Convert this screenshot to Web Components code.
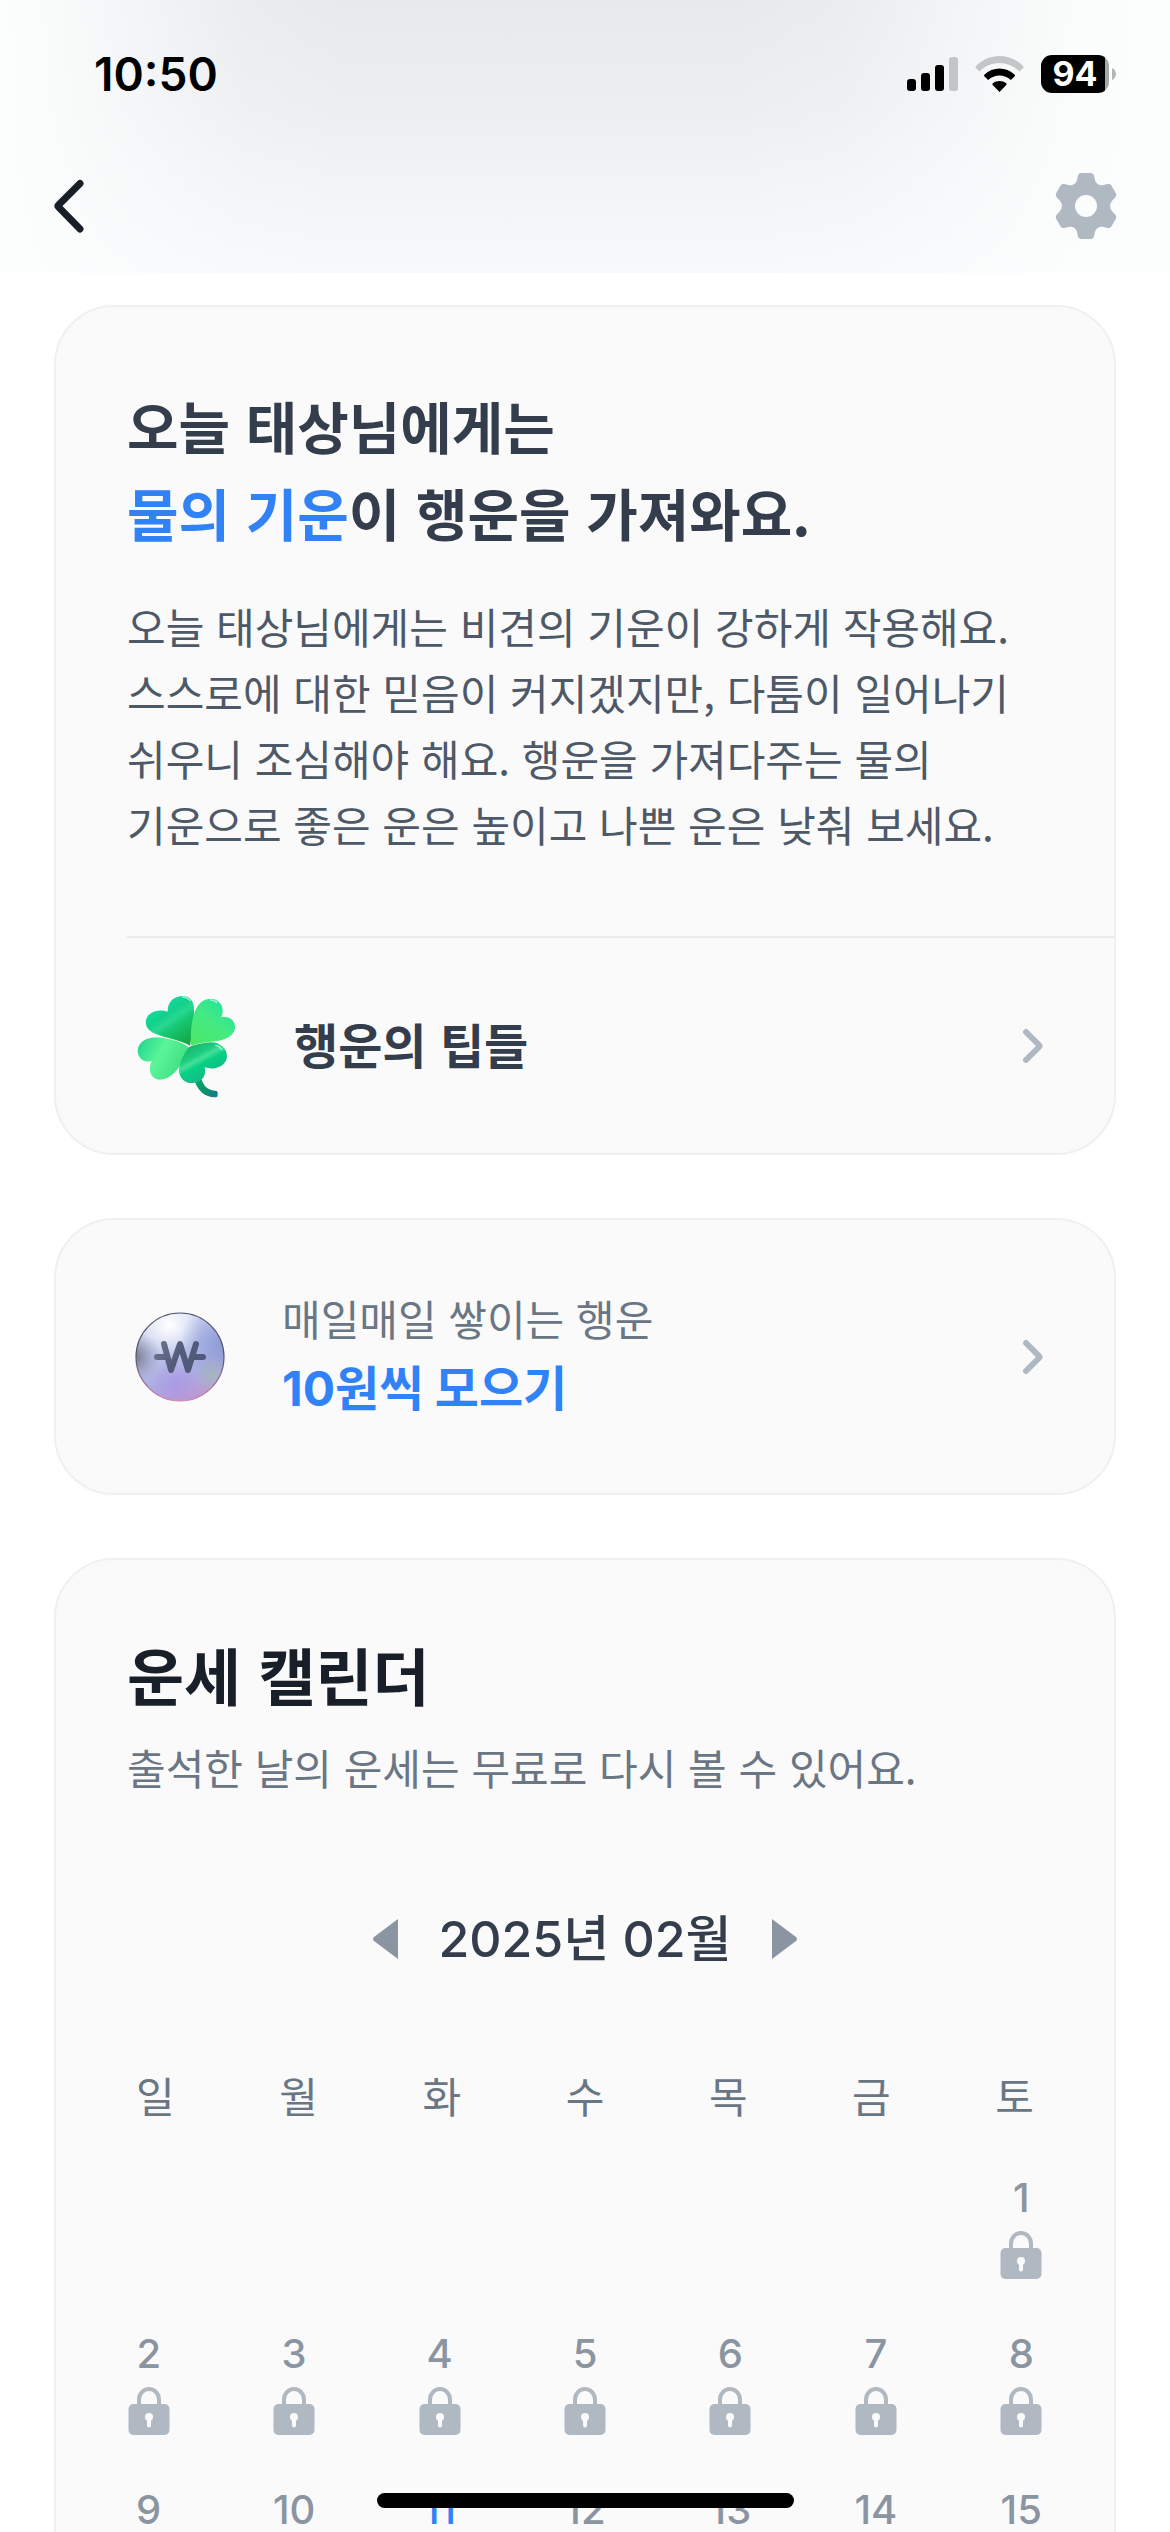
<!DOCTYPE html>
<html lang="ko">
<head>
<meta charset="utf-8">
<meta name="viewport" content="width=device-width, initial-scale=1">
<title>오늘의 운세</title>
<style>
  body {
    margin: 0;
    background: #fff;
    font-family: "Noto Sans CJK KR", "Noto Sans", sans-serif;
    --num: Inter, "Noto Sans CJK KR", sans-serif;
    --ink: #191f28;
    --strong: #333d4b;
    --body: #4e5968;
    --muted: #6b7684;
    --faint: #8b95a1;
    --icon: #b0b8c1;
    --blue: #3182f6;
    --line: #f0f0f0;
  }
</style>
</head>
<body>
<fortune-app></fortune-app>

<template id="t-app">
  <style>
    :host { display: flex; flex-direction: column; height: 100vh; overflow: hidden; }
    header {
      flex: none;
      background:
        linear-gradient(to right, #fcfdfd 0%, #fcfdfde6 4%, #fcfdfd80 13%, #fcfdfd26 21%, #fcfdfd00 30%, #fcfdfd00 62%, #fcfdfd26 72%, #fcfdfd80 81%, #fcfdfde6 91%, #fcfdfd 98%),
        linear-gradient(#e7eaed, #eceef0 40%, #f2f3f5 65%, #f8f9fb);
    }
    main { flex: 1; min-height: 0; overflow: hidden; display: flex; flex-direction: column; gap: 63px; padding: 32px 54px 0; }
    main > * { flex: none; }
    em { font-style: normal; color: var(--blue); }
  </style>
  <header>
    <status-bar></status-bar>
    <nav-bar></nav-bar>
  </header>
  <main>
    <fortune-card>
      <fortune-summary>
        <span slot="title">오늘 태상님에게는<br><em>물의 기운</em>이 행운을 가져와요.</span>
        <span slot="text">오늘 태상님에게는 비견의 기운이 강하게 작용해요.<br>스스로에 대한 믿음이 커지겠지만, 다툼이 일어나기<br>쉬우니 조심해야 해요. 행운을 가져다주는 물의<br>기운으로 좋은 운은 높이고 나쁜 운은 낮춰 보세요.</span>
      </fortune-summary>
      <tips-row>행운의 팁들</tips-row>
    </fortune-card>
    <fortune-card>
      <reward-row><span slot="label">매일매일 쌓이는 행운</span><span slot="value">10원씩 모으기</span></reward-row>
    </fortune-card>
    <fortune-card>
      <fortune-calendar></fortune-calendar>
    </fortune-card>
  </main>
  <home-indicator></home-indicator>
</template>

<template id="t-status">
  <style>
    :host { display: flex; align-items: center; justify-content: space-between; height: 148px; padding: 0 54px 0 94px; font-family: var(--num); color: #000; }
    time { font-size: 46px; font-weight: 600; }
    .right { display: flex; align-items: center; gap: 17px; }
    .battery { display: flex; align-items: center; gap: 3px; }
    .level { display: grid; place-items: center; width: 68px; height: 38px; border-radius: 11px; background: linear-gradient(to right, #000 94%, #a6a7a8 94%); color: #fff; font-size: 34px; font-weight: 700; line-height: 38px; }
    svg { display: block; }
  </style>
  <time>10:50</time>
  <div class="right">
    <svg width="51" height="36" viewBox="0 0 51 36" aria-hidden="true">
      <rect x="0" y="23" width="9" height="12" rx="3"/><rect x="14" y="17" width="9" height="18" rx="3"/>
      <rect x="28" y="9" width="9" height="26" rx="3"/><rect x="42" y="1" width="9" height="34" rx="3" fill="#c4c5c6"/>
    </svg>
    <svg width="49" height="36" viewBox="0 0 49 36" aria-hidden="true">
      <path d="M.8 10.2C14-3.4 35-3.4 48.2 10.2c.5.6.5 1.200 0 1.700l-3.600 3.600C33 4.200 16 4.200 4.400 15.500L.8 11.900c-.5-.5-.5-1.100 0-1.700z" fill="#c4c5c6"/>
      <path d="M9.300 18.700c8.600-8.300 21.800-8.300 30.400 0 .5.500.5 1.100 0 1.600l-3.800 3.800c-6.600-6-16.200-6-22.800 0l-3.800-3.800c-.5-.5-.5-1.100 0-1.600z"/>
      <path d="M17.800 27.300c3.900-3.200 9.500-3.200 13.400 0 .6.500.6 1.100.1 1.600L24.500 36l-6.800-7.100c-.5-.5-.5-1.100.1-1.600z"/>
    </svg>
    <div class="battery">
      <div class="level">94</div>
      <svg width="4" height="12" viewBox="0 0 4 12" aria-hidden="true"><path d="M0 0c5.300 2 5.300 10 0 12z" fill="#b4b5b6"/></svg>
    </div>
  </div>
</template>

<template id="t-nav">
  <style>
    :host { display: flex; align-items: center; justify-content: space-between; height: 115px; padding: 0 52px 10px; }
    button { display: block; border: 0; padding: 0; background: none; }
    svg { display: block; }
  </style>
  <button aria-label="뒤로">
    <svg width="34" height="56" viewBox="0 0 34 56" fill="none" stroke="#191f28" stroke-width="7" stroke-linecap="round" stroke-linejoin="round"><path d="M28 5.500 6.500 27q-1 1 0 2L28 51"/></svg>
  </button>
  <button aria-label="설정">
    <svg width="64" height="66" viewBox="0 0 64 66"><path fill="#b0b8c1" fill-rule="evenodd" d="M27.500 0h9c2 0 3.200 1 3.600 3l1 4.500c1 3.600 5 5.500 8.500 4.600l4-1c1.600-.4 3 .1 3.900 1.600l4.200 7.200c.9 1.500.6 3.200-.6 4.500l-3.200 3.600c-2.400 3-2.400 7 0 10l3.200 3.600c1.200 1.300 1.500 3 .6 4.500l-4.200 7.200c-.9 1.500-2.300 2-3.900 1.600l-4-1c-3.500-.9-7.500 1-8.500 4.600l-1 4.500c-.4 2-1.600 3-3.600 3h-9c-2 0-3.200-1-3.600-3l-1-4.500c-1-3.600-5-5.500-8.500-4.600l-4 1c-1.600.4-3-.1-3.900-1.600l-4.200-7.200c-.9-1.500-.6-3.200.6-4.500L6.100 38c2.400-3 2.400-7 0-10l-3.200-3.600c-1.200-1.300-1.500-3-.6-4.500l4.200-7.200c.9-1.500 2.300-2 3.900-1.600l4 1c3.500.9 7.500-1 8.500-4.600l1-4.500c.4-2 1.600-3 3.600-3zM32 22a11 11 0 1 0 0 22 11 11 0 0 0 0-22z"/></svg>
  </button>
</template>

<template id="t-card">
  <style>
    :host { display: block; box-sizing: border-box; background: #fafafa; border: 2px solid var(--line); border-radius: 60px; overflow: hidden; }
  </style>
  <slot></slot>
</template>

<template id="t-summary">
  <style>
    :host { display: block; padding: 74px 71px 0; }
    h1 { margin: 0; font-size: 56px; line-height: 87px; font-weight: 700; color: var(--strong); white-space: nowrap; }
    p { margin: 38px 0 0; font-size: 42px; line-height: 66px; color: var(--body); white-space: nowrap; }
  </style>
  <h1><slot name="title"></slot></h1>
  <p><slot name="text"></slot></p>
</template>

<template id="t-tips">
  <style>
    :host { display: block; margin-top: 79px; padding-left: 71px; }
    a { display: flex; align-items: center; height: 215px; padding-right: 70px; border-top: 2px solid #ebebeb; text-decoration: none; font-size: 48px; line-height: 72px; font-weight: 700; color: var(--strong); }
    .pic { width: 120px; margin-right: 47px; display: grid; place-items: center; }
    .name { flex: 1; padding-bottom: 6px; }
    svg { display: block; }
  </style>
  <a href="#tips">
    <span class="pic">
      <svg width="120" height="120" viewBox="51 50 360 360" aria-hidden="true">
        <defs>
          <linearGradient id="d1" gradientUnits="userSpaceOnUse" x1="140" y1="100" x2="225" y2="225"><stop offset="0" stop-color="#0fe0a6"/><stop offset=".3" stop-color="#13d08a"/><stop offset=".45" stop-color="#28d892"/><stop offset=".58" stop-color="#16c975"/><stop offset="1" stop-color="#16a846"/></linearGradient>
          <linearGradient id="d2" gradientUnits="userSpaceOnUse" x1="345" y1="100" x2="250" y2="215"><stop offset="0" stop-color="#25e29a"/><stop offset=".45" stop-color="#44ea82"/><stop offset="1" stop-color="#4be76a"/></linearGradient>
          <linearGradient id="d3" gradientUnits="userSpaceOnUse" x1="85" y1="220" x2="215" y2="290"><stop offset="0" stop-color="#22d78f"/><stop offset=".5" stop-color="#5bf598"/><stop offset="1" stop-color="#3fe083"/></linearGradient>
          <linearGradient id="d4" gradientUnits="userSpaceOnUse" x1="240" y1="225" x2="300" y2="335"><stop offset="0" stop-color="#14b766"/><stop offset=".3" stop-color="#1ccc81"/><stop offset=".42" stop-color="#43e09a"/><stop offset=".55" stop-color="#08d083"/><stop offset="1" stop-color="#12b58a"/></linearGradient>
          <linearGradient id="d5" gradientUnits="userSpaceOnUse" x1="262" y1="335" x2="322" y2="376"><stop offset="0" stop-color="#07a46a"/><stop offset=".6" stop-color="#0b8d70"/><stop offset="1" stop-color="#167a8c"/></linearGradient>
        </defs>
        <path d="M254 336C264 365 285 384 314 384Q323 385 323 376V370Q323 363 314 364C294 362 282 352 274 330Z" fill="url(#d5)"/>
        <path d="M240 229C205 210 165 206 140 195 105 182 100 155 116 137 130 123 155 121 173 127 172 100 190 81 216 80 240 80 252 94 252 122 252 160 247 195 240 229Z" fill="url(#d1)"/>
        <path d="M243 229C240 180 247 135 262 112 275 92 290 88 308 89 334 94 345 118 334 144 360 138 377 155 375 177 370 203 345 212 315 216 290 219 265 221 243 229Z" fill="url(#d2)"/>
        <path d="M236 233C200 210 160 203 125 205 97 208 82 228 83 247 86 270 105 281 126 275 112 300 122 330 149 331 178 331 198 308 213 285 222 268 229 250 236 233Z" fill="url(#d3)"/>
        <path d="M237 233C218 258 206 288 207 307 210 330 230 343 250 341 276 338 290 320 284 294 312 304 348 292 351 262 352 238 330 219 304 219 280 220 258 225 237 233Z" fill="url(#d4)"/>
        <path d="M218 83q14 0 22 10M302 92q12 0 18 7M318 228q12 4 17 12" fill="none" stroke="#c8ffe8" stroke-width="5" stroke-linecap="round" opacity=".7"/>
      </svg>
    </span>
    <span class="name"><slot></slot></span>
    <chevron-icon></chevron-icon>
  </a>
</template>

<template id="t-chevron">
  <style>:host { display: block; } svg { display: block; }</style>
  <svg width="24" height="36" viewBox="0 0 24 36" aria-hidden="true" fill="none" stroke="#b0b8c1" stroke-width="6" stroke-linecap="round" stroke-linejoin="round"><path d="M6 4 19 17q1 1 0 2L6 32"/></svg>
</template>

<template id="t-reward">
  <style>
    :host { display: block; }
    a { display: flex; align-items: center; height: 273px; padding: 0 70px; text-decoration: none; }
    .pic { width: 108px; margin-right: 48px; display: grid; place-items: center; }
    .text { flex: 1; display: flex; flex-direction: column; gap: 2px; padding-bottom: 4px; }
    .label { font-size: 42px; line-height: 66px; color: var(--muted); }
    .value { font-family: var(--num); font-size: 48px; line-height: 72px; font-weight: 700; color: var(--blue); }
  </style>
  <a href="#reward">
    <span class="pic">
      <svg width="90" height="90" viewBox="0 0 90 90" aria-hidden="true">
        <defs>
          <linearGradient id="b" x1=".2" y1="0" x2=".5" y2="1"><stop offset="0" stop-color="#dde4fa"/><stop offset=".4" stop-color="#bcc5ea"/><stop offset=".75" stop-color="#adaee2"/><stop offset="1" stop-color="#bd9bd0"/></linearGradient>
          <radialGradient id="h" cx=".38" cy=".14" r=".38"><stop offset="0" stop-color="#fff"/><stop offset="1" stop-color="#fff" stop-opacity="0"/></radialGradient>
          <radialGradient id="l" cx="-.02" cy=".5" r=".3"><stop offset="0" stop-color="#6f7081"/><stop offset="1" stop-color="#9a9fb8" stop-opacity="0"/></radialGradient>
          <radialGradient id="r" cx="1" cy=".35" r=".5"><stop offset="0" stop-color="#8b99d4"/><stop offset="1" stop-color="#8f9cd8" stop-opacity="0"/></radialGradient>
          <radialGradient id="g" cx=".88" cy=".7" r=".2"><stop offset="0" stop-color="#a5b6bd"/><stop offset="1" stop-color="#a5b6bd" stop-opacity="0"/></radialGradient>
          <radialGradient id="p" cx=".45" cy=".82" r=".3"><stop offset="0" stop-color="#a995e6" stop-opacity=".7"/><stop offset="1" stop-color="#a98fea" stop-opacity="0"/></radialGradient>
          <linearGradient id="e" x1="0" y1="0" x2="0" y2="1"><stop offset="0" stop-color="#55586a"/><stop offset=".5" stop-color="#555a78"/><stop offset="1" stop-color="#cf86b4"/></linearGradient>
          <linearGradient id="w" gradientUnits="userSpaceOnUse" x1="20" y1="30" x2="66" y2="60"><stop offset="0" stop-color="#6f7690"/><stop offset=".5" stop-color="#535b7b"/><stop offset="1" stop-color="#4f5878"/></linearGradient>
        </defs>
        <circle cx="45" cy="45" r="44" fill="url(#b)"/>
        <circle cx="45" cy="45" r="44" fill="url(#h)"/><circle cx="45" cy="45" r="44" fill="url(#l)"/>
        <circle cx="45" cy="45" r="44" fill="url(#r)"/><circle cx="45" cy="45" r="44" fill="url(#g)"/>
        <circle cx="45" cy="45" r="44" fill="url(#p)"/>
        <circle cx="45" cy="45" r="44" fill="none" stroke="url(#e)" stroke-width="1.200"/>
        <path d="M22 45h8M60 45h8M29 32l7 26 9-26 8 26 8-26" fill="none" stroke="url(#w)" stroke-width="6" stroke-linecap="round" stroke-linejoin="round"/>
      </svg>
    </span>
    <span class="text"><span class="label"><slot name="label"></slot></span><span class="value"><slot name="value"></slot></span></span>
    <chevron-icon></chevron-icon>
  </a>
</template>

<template id="t-calendar">
  <style>
    :host { display: block; padding: 70px 20px 0; }
    h2 { margin: 0 51px; font-size: 62px; line-height: 88px; font-weight: 700; color: var(--ink); }
    p { margin: 16px 51px 0; font-size: 42px; line-height: 66px; color: var(--muted); white-space: nowrap; }
    .month { display: flex; align-items: center; justify-content: center; gap: 40px; margin-top: 103px; height: 72px; }
    .month strong { font-family: var(--num); font-size: 50px; line-height: 72px; font-weight: 500; color: var(--strong); }
    button { display: block; border: 0; padding: 0; background: none; }
    svg { display: block; }
    table { display: block; margin-top: 87px; }
    thead, tbody { display: block; }
    thead tr { display: flex; justify-content: space-between; padding: 0 60px; }
    th { padding: 0; font-size: 42px; line-height: 66px; font-weight: 400; color: var(--muted); }
    tbody { padding-top: 46px; }
    tbody tr { display: grid; grid-template-columns: repeat(7, 1fr); height: 156px; }
    td { display: flex; flex-direction: column; align-items: center; gap: 12px; padding: 4px 0 0; font-family: var(--num); font-size: 40px; line-height: 40px; font-weight: 500; color: var(--faint); }
    td.today { color: var(--blue); }
  </style>
  <h2>운세 캘린더</h2>
  <p>출석한 날의 운세는 무료로 다시 볼 수 있어요.</p>
  <div class="month">
    <button aria-label="이전 달"><svg width="25" height="40" viewBox="0 0 25 40"><path d="M25 0v40L1 22q-2-2 0-4z" fill="#8b95a1"/></svg></button>
    <strong>2025년 02월</strong>
    <button aria-label="다음 달"><svg width="25" height="40" viewBox="0 0 25 40"><path d="M0 0v40l24-18q2-2 0-4z" fill="#8b95a1"/></svg></button>
  </div>
  <table>
    <thead><tr><th>일</th><th>월</th><th>화</th><th>수</th><th>목</th><th>금</th><th>토</th></tr></thead>
    <tbody></tbody>
  </table>
</template>

<template id="t-lock">
  <style>:host { display: block; } svg { display: block; }</style>
  <svg width="42" height="49" viewBox="0 0 42 49" aria-hidden="true"><path d="M11 20V13.500a10 10.500 0 0 1 20 0V20" fill="none" stroke="#b0b8c1" stroke-width="4"/><rect x=".5" y="18" width="41" height="31" rx="5" fill="#b0b8c1"/><circle cx="21" cy="31" r="4" fill="#fafafa"/><path d="M21 32v7.500" stroke="#fafafa" stroke-width="4" stroke-linecap="round"/></svg>
</template>

<template id="t-home">
  <style>
    :host { position: fixed; left: 0; right: 0; bottom: 24px; display: flex; justify-content: center; pointer-events: none; }
    div { width: 417px; height: 15px; border-radius: 8px; background: #000; }
  </style>
  <div></div>
</template>

<script>
  class ViewElement extends HTMLElement {
    constructor() {
      super();
      this.attachShadow({ mode: "open" })
        .append(document.getElementById(this.constructor.template).content.cloneNode(true));
    }
  }
  const define = (name, template) =>
    customElements.define(name, class extends ViewElement { static template = template; });

  define("chevron-icon", "t-chevron");
  define("lock-icon", "t-lock");
  define("status-bar", "t-status");
  define("nav-bar", "t-nav");
  define("fortune-card", "t-card");
  define("fortune-summary", "t-summary");
  define("tips-row", "t-tips");
  define("reward-row", "t-reward");
  define("home-indicator", "t-home");

  customElements.define("fortune-calendar", class extends ViewElement {
    static template = "t-calendar";
    constructor() {
      super();
      const body = this.shadowRoot.querySelector("tbody");
      const firstWeekday = 6, today = 11, lastShown = 15;
      for (let start = 1 - firstWeekday; start <= lastShown; start += 7) {
        const row = body.insertRow();
        for (let day = start; day < start + 7; day++) {
          const cell = row.insertCell();
          if (day < 1) continue;
          const label = document.createElement("span");
          label.textContent = day;
          cell.append(label);
          if (day === today) cell.className = "today";
          else cell.append(document.createElement("lock-icon"));
        }
      }
    }
  });

  define("fortune-app", "t-app");
</script>
</body>
</html>
